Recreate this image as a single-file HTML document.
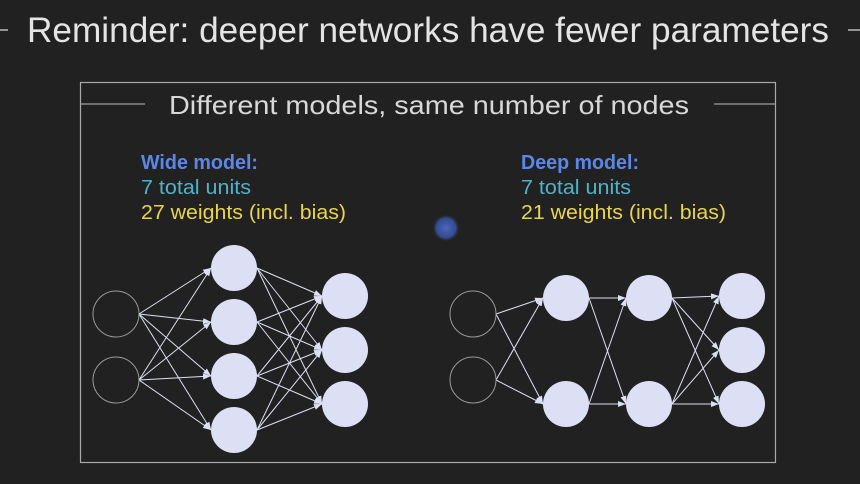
<!DOCTYPE html>
<html><head><style>
body{margin:0;width:860px;height:479px;background:#212121;overflow:hidden;font-family:"Liberation Sans",sans-serif}
</style></head><body>
<svg width="860" height="479" viewBox="0 0 860 479" xmlns="http://www.w3.org/2000/svg">
<defs><marker id="a" markerWidth="8" markerHeight="6" refX="8" refY="3" orient="auto" markerUnits="userSpaceOnUse"><path d="M0,0 L8,3 L0,6 z" fill="#dde0f4"/></marker>
<radialGradient id="g"><stop offset="0" stop-color="#4a68c0"/><stop offset="0.7" stop-color="#3a56a8" stop-opacity="0.8"/><stop offset="1" stop-color="#212121" stop-opacity="0"/></radialGradient></defs>
<line x1="0" y1="30" x2="8" y2="30" stroke="#bbb" stroke-width="1.5"/>
<line x1="848" y1="30" x2="860" y2="30" stroke="#bbb" stroke-width="1.5"/>
<text x="428" y="42" text-anchor="middle" font-size="35" fill="#e4e4e4" font-weight="300" textLength="802" lengthAdjust="spacingAndGlyphs">Reminder: deeper networks have fewer parameters</text>
<rect x="80.5" y="82.5" width="695" height="380" fill="none" stroke="#aaa" stroke-width="1.2"/>
<line x1="81" y1="104" x2="145" y2="104" stroke="#bbb"/>
<line x1="714" y1="104" x2="775" y2="104" stroke="#bbb"/>
<text x="429" y="114" text-anchor="middle" font-size="26" fill="#d8d8d8" font-weight="300" textLength="520" lengthAdjust="spacingAndGlyphs">Different models, same number of nodes</text>
<g font-size="20" lengthAdjust="spacingAndGlyphs">
<text x="141" y="169" fill="#5b87e8" font-weight="bold" textLength="117" lengthAdjust="spacingAndGlyphs">Wide model:</text>
<text x="141" y="194" fill="#4fb3c8" textLength="110" lengthAdjust="spacingAndGlyphs">7 total units</text>
<text x="141" y="219" fill="#e8d44d" textLength="205" lengthAdjust="spacingAndGlyphs">27 weights (incl. bias)</text>
<text x="521" y="169" fill="#5b87e8" font-weight="bold" textLength="118" lengthAdjust="spacingAndGlyphs">Deep model:</text>
<text x="521" y="194" fill="#4fb3c8" textLength="110" lengthAdjust="spacingAndGlyphs">7 total units</text>
<text x="521" y="219" fill="#e8d44d" textLength="205" lengthAdjust="spacingAndGlyphs">21 weights (incl. bias)</text>
</g>
<circle cx="446" cy="228" r="14" fill="url(#g)"/>
<g stroke="#dde0f4" stroke-width="1" marker-end="url(#a)">
<line x1="139" y1="314" x2="211" y2="268"/><line x1="139" y1="314" x2="211" y2="322"/><line x1="139" y1="314" x2="211" y2="376"/><line x1="139" y1="314" x2="211" y2="430"/>
<line x1="139" y1="380" x2="211" y2="268"/><line x1="139" y1="380" x2="211" y2="322"/><line x1="139" y1="380" x2="211" y2="376"/><line x1="139" y1="380" x2="211" y2="430"/>
<line x1="257" y1="268" x2="322" y2="296"/><line x1="257" y1="268" x2="322" y2="350"/><line x1="257" y1="268" x2="322" y2="404"/>
<line x1="257" y1="322" x2="322" y2="296"/><line x1="257" y1="322" x2="322" y2="350"/><line x1="257" y1="322" x2="322" y2="404"/>
<line x1="257" y1="376" x2="322" y2="296"/><line x1="257" y1="376" x2="322" y2="350"/><line x1="257" y1="376" x2="322" y2="404"/>
<line x1="257" y1="430" x2="322" y2="296"/><line x1="257" y1="430" x2="322" y2="350"/><line x1="257" y1="430" x2="322" y2="404"/>
<line x1="496" y1="314" x2="543" y2="298"/><line x1="496" y1="314" x2="543" y2="404"/>
<line x1="496" y1="380" x2="543" y2="298"/><line x1="496" y1="380" x2="543" y2="404"/>
<line x1="589" y1="298" x2="626" y2="298"/><line x1="589" y1="298" x2="626" y2="404"/>
<line x1="589" y1="404" x2="626" y2="298"/><line x1="589" y1="404" x2="626" y2="404"/>
<line x1="672" y1="298" x2="719" y2="296"/><line x1="672" y1="298" x2="719" y2="350"/><line x1="672" y1="298" x2="719" y2="404"/>
<line x1="672" y1="404" x2="719" y2="296"/><line x1="672" y1="404" x2="719" y2="350"/><line x1="672" y1="404" x2="719" y2="404"/>
</g>
<g fill="none" stroke="#999" stroke-width="1">
<circle cx="116" cy="314" r="23"/><circle cx="116" cy="380" r="23"/>
<circle cx="473" cy="314" r="23"/><circle cx="473" cy="380" r="23"/>
</g>
<g fill="#dde0f4">
<circle cx="234" cy="268" r="23"/><circle cx="234" cy="322" r="23"/><circle cx="234" cy="376" r="23"/><circle cx="234" cy="430" r="23"/>
<circle cx="345" cy="296" r="23"/><circle cx="345" cy="350" r="23"/><circle cx="345" cy="404" r="23"/>
<circle cx="566" cy="298" r="23"/><circle cx="566" cy="404" r="23"/>
<circle cx="649" cy="298" r="23"/><circle cx="649" cy="404" r="23"/>
<circle cx="742" cy="296" r="23"/><circle cx="742" cy="350" r="23"/><circle cx="742" cy="404" r="23"/>
</g>
</svg>
</body></html>
